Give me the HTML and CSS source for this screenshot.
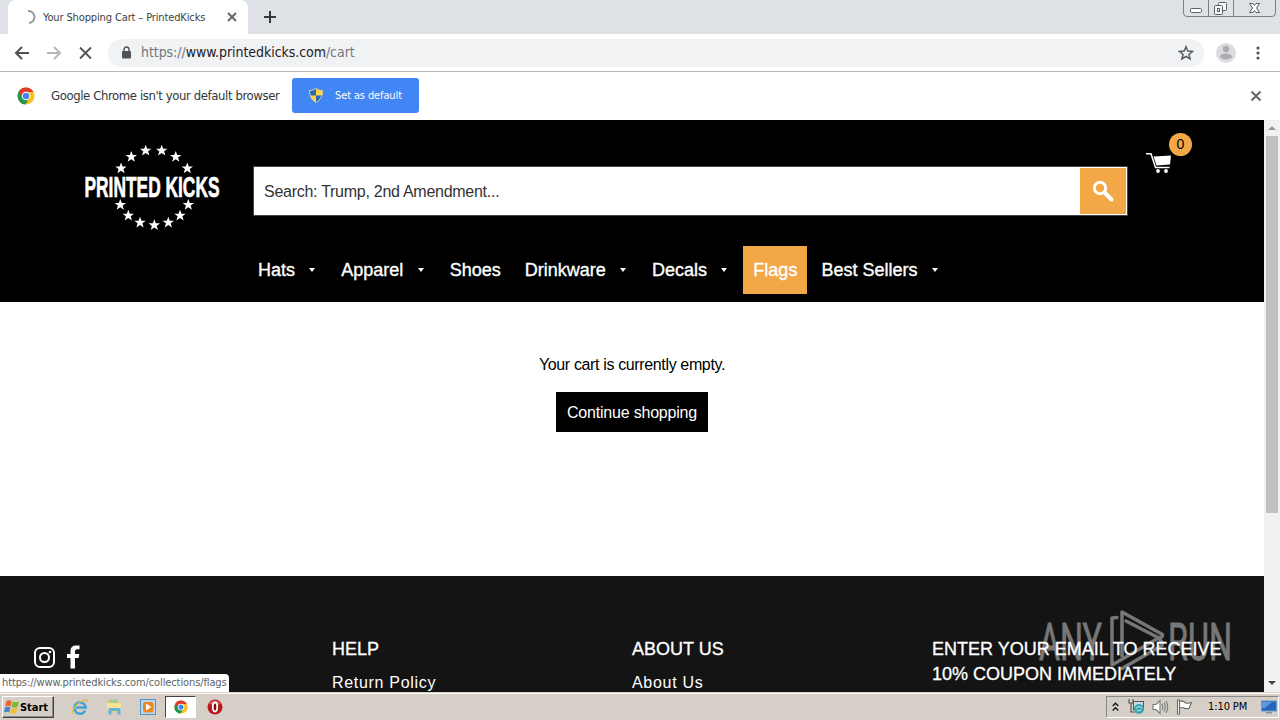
FILE: index.html
```html
<!DOCTYPE html>
<html lang="en">
<head>
<meta charset="utf-8">
<title>Your Shopping Cart – PrintedKicks</title>
<link rel="stylesheet" href="styles.css">
</head>
<body>
<svg width="0" height="0" class="defs">
  <defs>
    <path id="star" d="M0-6 1.500-2H5.700L2.400.6 3.600 4.800 0 2.300-3.600 4.800-2.400.6-5.700-2H-1.500Z"/>
    <g id="chrome">
      <circle cx="9" cy="9" r="8.500" fill="#fbc116"/>
      <path d="M1.600 4.800A8.500 8.500 0 0 0 8.400 17.500L12.400 11 9 9Z" fill="#219653"/>
      <path d="M1.600 4.800 5.500 11 9 5H16.400A8.500 8.500 0 0 0 1.600 4.800Z" fill="#dc3a2d"/>
      <circle cx="9" cy="9" r="4.300" fill="#fff"/><circle cx="9" cy="9" r="3.300" fill="#4285f4"/>
    </g>
  </defs>
</svg>
<div class="screen">
  <div class="tabstrip">
    <div class="tab">
      <svg class="spinner" width="14" height="14" fill="none" stroke="#999b9e" stroke-width="2"><path d="M6 1A6 6 0 0 1 7 13"/></svg>
      <span class="tab-title">Your Shopping Cart – PrintedKicks</span>
      <svg class="tab-close" width="10" height="10" stroke="#5f6368" stroke-width="1.800"><path d="M1 1 9 9M9 1 1 9"/></svg>
    </div>
    <svg class="newtab" width="12" height="12" stroke="#34373b" stroke-width="2"><path d="M6 0V12M0 6H12"/></svg>
    <svg class="winbtns" width="94" height="18" fill="none" stroke="#7b8087">
      <path d="M.5 0V13Q.5 16.500 4 16.500H89Q92.500 16.500 92.500 13V0M25.500 0V16M50.500 0V16"/>
      <rect x="7.500" y="8.500" width="11" height="4" rx="1" fill="#fff" stroke="#5c6066"/>
      <g stroke="#5c6066" fill="#f5f6f8"><rect x="35.500" y="2.500" width="8" height="8" rx="1"/><rect x="31.500" y="5.500" width="8" height="9" rx="1"/><rect x="34.500" y="8.500" width="2" height="3"/></g>
      <path d="M66.500 3.500H70L71.500 5.500 73 3.500H76.500L73.500 8 76.500 12.500H73L71.500 10.500 70 12.500H66.500L69.500 8Z" fill="#fff" stroke="#5c6066"/>
    </svg>
  </div>
  <div class="toolbar">
    <svg width="94" height="16" fill="none" stroke="#4f5357" stroke-width="2">
      <path d="M15 8H2M8 2 2 8 8 14"/><path d="M33 8H46M40 2 46 8 40 14" stroke="#b5b7ba"/><path d="M66 2.500 77 13.500M77 2.500 66 13.500" stroke-width="1.800"/>
    </svg>
    <div class="omnibox">
      <svg width="10" height="13"><rect y="5" width="9" height="7.500" rx="1" fill="#4f5357"/><path d="M2 6V3.500a2.500 2.500 0 0 1 5 0V6" fill="none" stroke="#4f5357" stroke-width="1.400"/></svg>
      <span class="url">https://<b>www.printedkicks.com</b>/cart</span>
      <svg class="bookmark" width="16" height="16" fill="none" stroke="#5b5f63" stroke-width="1.500"><path d="M8 1.700 9.800 6.100 14.500 6.400 10.900 9.400 12.100 14 8 11.500 3.900 14 5.100 9.400 1.500 6.400 6.200 6.100Z"/></svg>
    </div>
    <svg class="avatar" width="20" height="20"><circle cx="10" cy="10" r="10" fill="#dcdde0"/><circle cx="10" cy="6" r="3.200" fill="#aaacaf"/><ellipse cx="10" cy="13.500" rx="6" ry="3" fill="#aaacaf"/></svg>
    <svg class="dots" width="4" height="14" fill="#4f5357"><circle cx="2" cy="2" r="1.600"/><circle cx="2" cy="7" r="1.600"/><circle cx="2" cy="12" r="1.600"/></svg>
  </div>
  <div class="infobar">
    <svg width="18" height="18"><use href="#chrome"/></svg>
    <span class="info-text">Google Chrome isn't your default browser</span>
    <div class="default-btn">
      <svg width="14" height="15"><path d="M7 .5Q10 2.500 13.500 2.500 13.500 11 7 14.500 .5 11 .5 2.500 4 2.500 7 .5Z" fill="#2467bb"/><path d="M7 1V7.500H13.200Q13.500 5 13.400 2.700 10 2.500 7 1ZM7 7.500H1.200Q2.500 11.800 7 14.300Z" fill="#ffd33d"/><path d="M7 .5Q10 2.500 13.500 2.500 13.500 11 7 14.500 .5 11 .5 2.500 4 2.500 7 .5Z" fill="none" stroke="#d9d3a0" stroke-width="1"/></svg>
      <span>Set as default</span>
    </div>
    <svg class="info-close" width="12" height="12" stroke="#5f6368" stroke-width="2"><path d="M1.500 1.500 10.500 10.500M10.500 1.500 1.500 10.500"/></svg>
  </div>
  <div class="viewport">
    <div class="page">
      <header class="header">
        <svg class="logo" width="144" height="92" viewBox="80 142 144 92" fill="#fff">
          <use href="#star" x="121" y="168.500"/><use href="#star" x="131.300" y="157"/><use href="#star" x="145.700" y="150.700"/><use href="#star" x="161.700" y="150.700"/><use href="#star" x="175.700" y="157"/><use href="#star" x="187.300" y="168.500"/>
          <use href="#star" x="120.300" y="205"/><use href="#star" x="128.300" y="215.700"/><use href="#star" x="140" y="222.700"/><use href="#star" x="154.300" y="225.300"/><use href="#star" x="168.300" y="222.700"/><use href="#star" x="180" y="215.700"/><use href="#star" x="188.300" y="205"/>
          <text class="logo-text" x="84.500" y="197" textLength="135" lengthAdjust="spacingAndGlyphs">PRINTED KICKS</text>
        </svg>
        <div class="header-main">
          <div class="search">
            <span class="search-text">Search: Trump, 2nd Amendment...</span>
            <div class="search-btn"><svg width="24" height="24" fill="none" stroke="#fff"><circle cx="9" cy="9" r="5.700" stroke-width="3"/><path d="M13.500 13.500 20.500 20.500" stroke-width="4" stroke-linecap="round"/></svg></div>
          </div>
          <nav class="nav">
            <a class="drop">Hats</a><a class="drop">Apparel</a><a>Shoes</a><a class="drop">Drinkware</a><a class="drop">Decals</a><a class="active">Flags</a><a class="drop">Best Sellers</a>
          </nav>
        </div>
        <div class="cart">
          <svg width="26" height="23" fill="none" stroke="#fff" stroke-width="1.500"><path d="M0 2.700H5L9.500 16.500H23.500"/><path d="M7.500 5.500 25 4.500 24 13.500 10.500 14.500Z" fill="#fff" stroke="none"/><g fill="#fff" stroke="none"><circle cx="12" cy="20" r="1.900"/><circle cx="20" cy="20" r="1.900"/></g></svg>
          <span class="badge">0</span>
        </div>
      </header>
      <main class="main">
        <p class="empty">Your cart is currently empty.</p>
        <a class="continue">Continue shopping</a>
      </main>
      <footer class="footer">
        <svg class="watermark" width="200" height="66" viewBox="1035 608 200 66">
          <text class="wm-text" x="1039" y="659.500" textLength="63" lengthAdjust="spacingAndGlyphs">ANY</text>
          <text class="wm-text" x="1168" y="659.500" textLength="64" lengthAdjust="spacingAndGlyphs">RUN</text>
          <g fill="none" stroke="#777" stroke-width="3.500" stroke-linejoin="round" stroke-linecap="round"><path d="M1117 617.500 1112 618V665L1156 639.500"/><path d="M1122 656V612L1162.500 634.500Q1163 638 1158 637.500L1126 621"/><path d="M1122 668.500 1162 645.500Q1163 641 1158 638.500"/></g>
        </svg>
        <div class="social">
          <svg width="21" height="21" fill="none" stroke="#fff" stroke-width="2"><rect x="1" y="1" width="19" height="19" rx="5"/><circle cx="10.500" cy="10.500" r="4.500"/><circle cx="16" cy="5" r="1.300" fill="#fff" stroke="none"/></svg>
          <svg width="14" height="24" fill="#fff"><path d="M3.500 23.500V13H0V9H3.500V6Q3.500.5 9 .5H12.500V4.300H10Q8 4.300 8 6.500V9H12.300L11.600 13H8V23.500Z"/></svg>
        </div>
        <div class="col"><h3>HELP</h3><a>Return Policy</a></div>
        <div class="col"><h3>ABOUT US</h3><a>About Us</a></div>
        <div class="col wide"><h3>ENTER YOUR EMAIL TO RECEIVE<br>10% COUPON IMMEDIATELY</h3></div>
        <div class="status">https://www.printedkicks.com/collections/flags</div>
      </footer>
    </div>
    <div class="scrollbar"><i class="up"></i><div class="thumb"></div><i class="down"></i></div>
  </div>
  <div class="taskbar">
    <div class="start">
      <svg width="16" height="16"><path d="M2.500 2Q5 .5 7.500 2L6.500 7.500Q4 6 1.300 7.500Z" fill="#ec6431"/><path d="M8.500 2.500Q11.500 4 15 2.500L13.500 8Q10.500 9.500 7.500 8Z" fill="#80b935"/><path d="M1 8.500Q3.500 7 6.300 8.500L5.200 13.500Q3 12 0 13.500Z" fill="#4583cf"/><path d="M7.300 9Q10 10.500 13.200 9L12 14Q9 15.500 6.200 14Z" fill="#f6bd2c"/></svg>
      <span>Start</span>
    </div>
    <div class="quick">
      <svg width="18" height="18" fill="none"><path d="M14.200 12.500A5.700 5.700 0 1 1 14.700 9.500H5" stroke="#40a5dc" stroke-width="2.600"/><path d="M2 16C-1 15 4 7 10 3.500 15 .5 17 1.500 16 4" stroke="#e9b83d" stroke-width="1.300"/></svg>
      <svg width="18" height="18"><path d="M2 2H7L8 4H15V14H2Z" fill="#f0cc66"/><path d="M4 1.500H13V5H4Z" fill="#a5cf9a"/><path d="M2 5H16V13H2Z" fill="#f9e294"/><path d="M3.500 16.500V10H15.500V16.500H12.500V13H6.500V16.500Z" fill="#62b2dc"/></svg>
      <svg width="18" height="18"><rect x="1.500" y="1.500" width="15" height="15" fill="#b8d6ec" stroke="#5794c3"/><rect x="4" y="4" width="10.500" height="10.500" rx="3" fill="#f28318"/><path d="M7 5.500 12.500 9 7 12.500Z" fill="#fff"/></svg>
      <div class="task-active"><svg width="14" height="14" viewBox="0 0 18 18"><use href="#chrome"/></svg></div>
      <svg width="16" height="16"><circle cx="8" cy="8" r="7.500" fill="#b81920"/><path d="M2 5A7 7 0 0 1 14 5Q8 7 2 5Z" fill="#e05a58"/><ellipse cx="8" cy="8" rx="2.200" ry="4.500" fill="#7e080c" stroke="#fff" stroke-width="1.800"/></svg>
    </div>
    <div class="tray">
      <svg width="7" height="10" fill="none" stroke="#111" stroke-width="1.300"><path d="M.7 4 3.500 1.200 6.300 4M.7 8.500 3.500 5.700 6.300 8.500"/></svg>
      <svg width="17" height="17"><path d="M1 1V5H5V1M3 5V14H7" fill="none" stroke="#555" stroke-width="1.200"/><rect x="5.500" y="3.500" width="10" height="8" fill="#c8dce4" stroke="#555"/><circle cx="11" cy="11" r="5" fill="#3ca5b0"/><path d="M8 10Q11 7 14 10M9 13 13 12" stroke="#b8eff0" fill="none"/></svg>
      <svg width="17" height="16" fill="none" stroke="#77797b" stroke-width="1.100"><path d="M1 5.500H4L8 1.500V14.500L4 10.500H1Z" fill="#fff"/><path d="M10 5Q11.500 8 10 11M12 3.500Q14.500 8 12 12.500M14 2Q17.500 8 14 14"/></svg>
      <svg width="17" height="16" fill="#fff" stroke="#686a6c" stroke-width="1.100"><path d="M1.500 1H3.500V15H1.500ZM3.500 2.500Q7 1.500 9 3.500 11 5 15.500 3.500L13 9.500Q9 10 8 9 6 8 3.500 9Z"/></svg>
      <span class="clock">1:10 PM</span>
      <svg width="16" height="14"><rect x=".5" y="1" width="15" height="10" fill="#2566bd" stroke="#6e96c6"/><path d="M1 2H11L4 8H1Z" fill="#5b97e0"/><path d="M5 12H11V13.500H5Z" fill="#8194a8"/></svg>
    </div>
  </div>
</div>
</body>
</html>
```
FILE: styles.css
```css
* { box-sizing: border-box; }
body { margin: 0; font-family: "Liberation Sans", Arial, sans-serif; color: #000; }
svg { display: block; flex: none; }
.defs { position: absolute; }
.screen { width: 1280px; height: 720px; overflow: hidden; display: flex; flex-direction: column; background: #fff; }

.tabstrip { height: 34px; flex: none; display: flex; background: #dee1e6; padding-left: 8px; }
.tab { width: 240px; background: #fff; border-radius: 8px 8px 0 0; display: flex; align-items: center; padding-left: 14px; }
.spinner { margin-right: 7px; }
.tab-title { width: 184px; white-space: nowrap; color: #3c4043; font: 11px "DejaVu Sans Condensed", "DejaVu Sans", sans-serif; letter-spacing: -.13px; }
.newtab { margin: 11px 0 0 16px; }
.winbtns { margin-left: auto; margin-right: 3px; }

.toolbar { height: 38px; flex: none; display: flex; align-items: center; padding: 0 20px 0 14px; border-bottom: 1px solid #b5b6b7; }
.omnibox { flex: 1; height: 28px; border-radius: 14px; background: #f0f2f4; display: flex; align-items: center; padding: 0 10px 0 14px; }
.url { margin-left: 9px; padding-bottom: 2px; color: #73777b; font: 14px "DejaVu Sans Condensed", "DejaVu Sans", sans-serif; letter-spacing: -.06px; white-space: nowrap; }
.url b { font-weight: 400; color: #1d2023; }
.bookmark { margin-left: auto; }
.avatar { margin: 0 20px 0 12px; }

.infobar { height: 48px; flex: none; display: flex; align-items: center; padding: 0 18px 0 17px; }
.info-text { width: 241px; margin-left: 16px; padding-bottom: 2px; white-space: nowrap; color: #333639; font: 13px "DejaVu Sans Condensed", "DejaVu Sans", sans-serif; letter-spacing: -.4px; }
.default-btn { width: 127px; height: 35px; margin-bottom: 2px; border-radius: 3px; background: #4285f4; color: #fff; display: flex; align-items: center; padding-left: 17px; gap: 12px; font: 11px "DejaVu Sans Condensed", "DejaVu Sans", sans-serif; letter-spacing: -.12px; white-space: nowrap; }
.info-close { margin-left: auto; }

.viewport { height: 572px; flex: none; display: flex; }
.page { width: 1264px; display: flex; flex-direction: column; }
.header { height: 182px; flex: none; background: #000; display: flex; }
.logo { margin: 22px 0 0 80px; }
.logo-text { font: bold 30px "Liberation Sans Narrow", "Liberation Sans", sans-serif; stroke: #fff; stroke-width: .7px; }
.header-main { width: 875px; margin: 46px 0 0 29px; }
.search { height: 50px; border: 1px solid #444; background: #fff; display: flex; align-items: center; padding: 1px; }
.search-text { flex: 1; padding: 2px 0 0 9px; font-size: 16px; letter-spacing: -.27px; color: #333; }
.search-btn { width: 46px; height: 46px; background: #f3a847; display: flex; align-items: center; justify-content: center; }
.nav { display: flex; gap: 4px; margin: 30px 0 0 -5px; }
.nav a { height: 48px; display: flex; align-items: center; padding: 0 10px; color: #fff; font-size: 18px; -webkit-text-stroke: .35px #fff; white-space: nowrap; }
.nav .drop { padding-right: 12px; }
.drop::after { content: ""; margin-left: 14.3px; border: 3.5px solid transparent; border-top: 4px solid #fff; border-bottom: 0; }
.nav .active { background: #f3a847; }
.cart { position: relative; margin: 31px 0 0 18px; width: 46px; height: 24px; }
.badge { position: absolute; left: 23px; top: -18px; width: 23px; height: 23px; border-radius: 50%; background: #f3a847; font-size: 14px; line-height: 23px; text-align: center; }

.main { height: 274px; flex: none; display: flex; flex-direction: column; align-items: center; padding-top: 50px; }
.empty { margin: 0; height: 40px; line-height: 25px; font-size: 16px; letter-spacing: -.36px; }
.continue { width: 152px; height: 40px; line-height: 42px; text-align: center; background: #000; color: #fff; font-size: 16px; letter-spacing: -.2px; }

.footer { position: relative; height: 116px; background: #141414; color: #fff; display: flex; padding: 61px 0 0 34px; overflow: hidden; }
.social { width: 298px; display: flex; gap: 12px; padding-top: 8px; }
.social svg:first-child { margin-top: 2px; }
.col { width: 300px; position: relative; }
.wide { flex: none; }
.col h3 { margin: 0; font-size: 18px; font-weight: 400; line-height: 25px; white-space: nowrap; -webkit-text-stroke: .3px #fff; }
.col a { display: block; margin-top: 8px; line-height: 25px; font-size: 16px; letter-spacing: .7px; }
.watermark { position: absolute; left: 1035px; top: 32px; }
.wm-text { font: 52px Roboto, sans-serif; fill: #777; stroke: #777; stroke-width: .9px; }
.status { position: absolute; left: 0; bottom: 0; width: 229px; height: 18px; background: #fff; border-radius: 0 4px 0 0; padding: 2px 0 0 2px; color: #606367; font: 11px/14px "DejaVu Sans Condensed", "DejaVu Sans", sans-serif; letter-spacing: -.11px; white-space: nowrap; }
.scrollbar { width: 16px; background: #f1f1f1; display: flex; flex-direction: column; align-items: center; }
.up { margin: 6px 0 6px; border: 4px solid transparent; border-bottom: 4px solid #999; border-top: 0; }
.thumb { width: 12px; height: 377px; background: #c1c1c1; }
.down { margin-top: auto; margin-bottom: 7px; border: 4px solid transparent; border-top: 4px solid #444; border-bottom: 0; }

.taskbar { height: 28px; flex: none; background: #d6cfc7; border-top: 1px solid #d6cfc7; box-shadow: inset 0 1px #fff; display: flex; align-items: center; padding-left: 2px; }
.start { width: 52px; height: 22px; margin-top: 1px; display: flex; align-items: center; gap: 0; padding-left: 1px; border: 1px solid; border-color: #fff #444 #444 #fff; box-shadow: inset -1px -1px #888; font: bold 11px "DejaVu Sans Condensed", "DejaVu Sans", sans-serif; letter-spacing: -.05px; }
.quick { display: flex; align-items: center; margin: 0 0 0 17px; gap: 16px; }
.task-active { width: 31px; height: 22px; margin: 0 -5px 0 -8px; background: #fff; border: 1px solid; border-color: #444 #fff #fff #444; display: flex; align-items: center; justify-content: center; }
.tray { width: 173px; height: 22px; margin: 0 1px 0 auto; display: flex; align-items: center; gap: 7px; padding-left: 5px; border: 1px solid; border-color: #888 #fff #fff #888; }
.tray svg:first-child { margin-right: 2px; }
.clock { width: 43px; margin: 0 3px 0 8px; white-space: nowrap; font: 11px "DejaVu Sans Condensed", "DejaVu Sans", sans-serif; letter-spacing: -.1px; }
```
